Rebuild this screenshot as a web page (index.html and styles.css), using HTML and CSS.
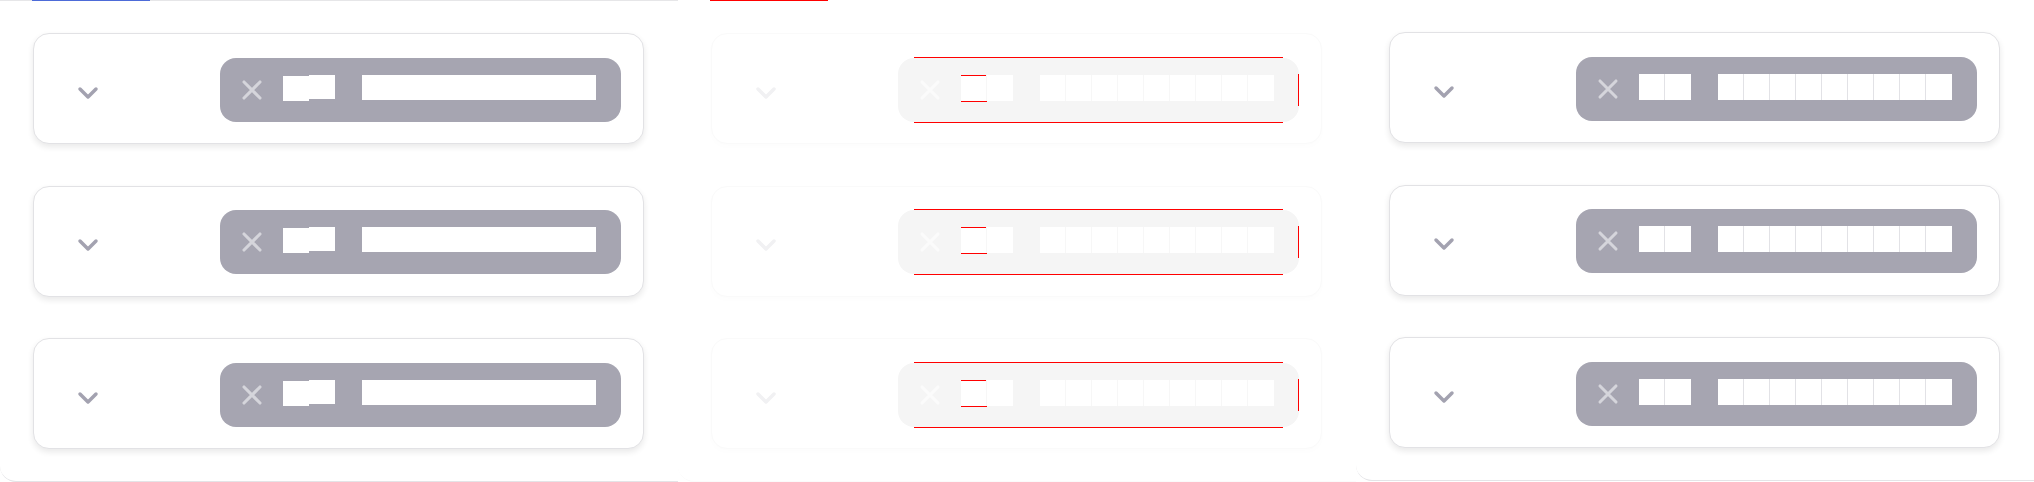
FILE: index.html
```html
<!DOCTYPE html>
<html lang="en">
<head>
<meta charset="utf-8">
<title>Chips</title>
<link rel="stylesheet" href="styles.css">
</head>
<body>
<div class="stage">
  <section class="panel panel-a">
    <div class="tabline"><span class="tab-ind"></span></div>
    <div class="list">
      <div class="card">
        <svg class="chev" viewBox="0 0 24 24"><path d="m6 9 6 6 6-6"/></svg>
        <div class="chip">
          <svg class="x" viewBox="0 0 24 24"><path d="M18 6 6 18M6 6l12 12"/></svg>
          <span class="word w1"><i class="c"></i><i class="c"></i></span>
          <span class="word w2"><i class="c"></i><i class="c"></i><i class="c"></i><i class="c"></i><i class="c"></i><i class="c"></i><i class="c"></i><i class="c"></i><i class="c"></i></span>
        </div>
      </div>
      <div class="card">
        <svg class="chev" viewBox="0 0 24 24"><path d="m6 9 6 6 6-6"/></svg>
        <div class="chip">
          <svg class="x" viewBox="0 0 24 24"><path d="M18 6 6 18M6 6l12 12"/></svg>
          <span class="word w1"><i class="c"></i><i class="c"></i></span>
          <span class="word w2"><i class="c"></i><i class="c"></i><i class="c"></i><i class="c"></i><i class="c"></i><i class="c"></i><i class="c"></i><i class="c"></i><i class="c"></i></span>
        </div>
      </div>
      <div class="card">
        <svg class="chev" viewBox="0 0 24 24"><path d="m6 9 6 6 6-6"/></svg>
        <div class="chip">
          <svg class="x" viewBox="0 0 24 24"><path d="M18 6 6 18M6 6l12 12"/></svg>
          <span class="word w1"><i class="c"></i><i class="c"></i></span>
          <span class="word w2"><i class="c"></i><i class="c"></i><i class="c"></i><i class="c"></i><i class="c"></i><i class="c"></i><i class="c"></i><i class="c"></i><i class="c"></i></span>
        </div>
      </div>
    </div>
  </section>

  <section class="panel panel-b">
    <div class="tabline"><span class="tab-ind"></span></div>
    <div class="list">
      <div class="card">
        <svg class="chev" viewBox="0 0 24 24"><path d="m6 9 6 6 6-6"/></svg>
        <div class="chip">
          <svg class="x" viewBox="0 0 24 24"><path d="M18 6 6 18M6 6l12 12"/></svg>
          <span class="word w1"><i class="c"></i><i class="c"></i></span>
          <span class="word w2"><i class="c"></i><i class="c"></i><i class="c"></i><i class="c"></i><i class="c"></i><i class="c"></i><i class="c"></i><i class="c"></i><i class="c"></i></span>
        </div>
      </div>
      <div class="card">
        <svg class="chev" viewBox="0 0 24 24"><path d="m6 9 6 6 6-6"/></svg>
        <div class="chip">
          <svg class="x" viewBox="0 0 24 24"><path d="M18 6 6 18M6 6l12 12"/></svg>
          <span class="word w1"><i class="c"></i><i class="c"></i></span>
          <span class="word w2"><i class="c"></i><i class="c"></i><i class="c"></i><i class="c"></i><i class="c"></i><i class="c"></i><i class="c"></i><i class="c"></i><i class="c"></i></span>
        </div>
      </div>
      <div class="card">
        <svg class="chev" viewBox="0 0 24 24"><path d="m6 9 6 6 6-6"/></svg>
        <div class="chip">
          <svg class="x" viewBox="0 0 24 24"><path d="M18 6 6 18M6 6l12 12"/></svg>
          <span class="word w1"><i class="c"></i><i class="c"></i></span>
          <span class="word w2"><i class="c"></i><i class="c"></i><i class="c"></i><i class="c"></i><i class="c"></i><i class="c"></i><i class="c"></i><i class="c"></i><i class="c"></i></span>
        </div>
      </div>
    </div>
  </section>

  <section class="panel panel-c">
    <div class="tabline"></div>
    <div class="list">
      <div class="card">
        <svg class="chev" viewBox="0 0 24 24"><path d="m6 9 6 6 6-6"/></svg>
        <div class="chip">
          <svg class="x" viewBox="0 0 24 24"><path d="M18 6 6 18M6 6l12 12"/></svg>
          <span class="word w1"><i class="c"></i><i class="c"></i></span>
          <span class="word w2"><i class="c"></i><i class="c"></i><i class="c"></i><i class="c"></i><i class="c"></i><i class="c"></i><i class="c"></i><i class="c"></i><i class="c"></i></span>
        </div>
      </div>
      <div class="card">
        <svg class="chev" viewBox="0 0 24 24"><path d="m6 9 6 6 6-6"/></svg>
        <div class="chip">
          <svg class="x" viewBox="0 0 24 24"><path d="M18 6 6 18M6 6l12 12"/></svg>
          <span class="word w1"><i class="c"></i><i class="c"></i></span>
          <span class="word w2"><i class="c"></i><i class="c"></i><i class="c"></i><i class="c"></i><i class="c"></i><i class="c"></i><i class="c"></i><i class="c"></i><i class="c"></i></span>
        </div>
      </div>
      <div class="card">
        <svg class="chev" viewBox="0 0 24 24"><path d="m6 9 6 6 6-6"/></svg>
        <div class="chip">
          <svg class="x" viewBox="0 0 24 24"><path d="M18 6 6 18M6 6l12 12"/></svg>
          <span class="word w1"><i class="c"></i><i class="c"></i></span>
          <span class="word w2"><i class="c"></i><i class="c"></i><i class="c"></i><i class="c"></i><i class="c"></i><i class="c"></i><i class="c"></i><i class="c"></i><i class="c"></i></span>
        </div>
      </div>
    </div>
  </section>
</div>
</body>
</html>
```
FILE: styles.css
```css
* { box-sizing: border-box; }
html, body {
  margin: 0;
  padding: 0;
  background: #ffffff;
  font-family: "Inter", "Liberation Sans", sans-serif;
}
.stage {
  display: flex;
  width: 2034px;
  height: 482px;
  overflow: hidden;
  align-items: flex-start;
}
.panel {
  --line: #e6e6e8;
  --ind: #4d6bd8;
  --card-border: #e2e2e5;
  --card-shadow: 0 3px 6px rgba(0, 0, 0, 0.09);
  --chev: #a3a2b0;
  --chip: #a6a5b1;
  --x: #d5d5db;
  --div: transparent;
  width: 678px;
  flex: 0 0 678px;
  height: 482px;
  background: #ffffff;
  border-bottom: 1px solid #e4e4e7;
  border-bottom-left-radius: 16px;
  display: flex;
  flex-direction: column;
}
.panel-b {
  --line: transparent;
  --ind: #ff0000;
  --card-border: #fafafa;
  --card-shadow: 0 3px 6px rgba(0, 0, 0, 0.012);
  --chev: #f1f1f3;
  --chip: #f5f5f5;
  --x: #fbfbfb;
  --div: #f7f7f7;
  border-bottom-color: #fbfbfb;
}
.panel-c {
  --div: #e2e2e6;
  height: 481px;
}
.tabline {
  height: 1px;
  flex: 0 0 1px;
  background: var(--line);
  display: flex;
}
.panel-c .tabline { height: 0; flex-basis: 0; }
.tab-ind {
  margin-left: 32px;
  width: 118px;
  height: 1px;
  background: var(--ind);
}
.list {
  padding: 32px 0 0 33px;
  display: flex;
  flex-direction: column;
  gap: 41.5px;
}
.card {
  width: 611px;
  height: 111px;
  border: 1px solid var(--card-border);
  border-radius: 16px;
  box-shadow: var(--card-shadow);
  background: #ffffff;
  display: flex;
  align-items: center;
  justify-content: space-between;
  padding: 0 22px 0 38px;
}
.chev {
  width: 32px;
  height: 32px;
  margin-top: 8px;
  fill: none;
  stroke: var(--chev);
  stroke-width: 2.6;
  stroke-linecap: round;
  stroke-linejoin: round;
}
.chip {
  position: relative;
  width: 401px;
  height: 64px;
  margin-top: 2px;
  border-radius: 16px;
  background: var(--chip);
  display: flex;
  align-items: center;
  padding: 0 25px 0 16px;
}
.x {
  width: 32px;
  height: 32px;
  flex: 0 0 32px;
  fill: none;
  stroke: var(--x);
  stroke-width: 2.3;
  stroke-linecap: round;
}
.word {
  display: flex;
  align-items: flex-start;
  height: 26px;
  margin-bottom: 4px;
}
.w1 { margin-left: 15px; }
.w2 { margin-left: 27px; }
.c {
  display: block;
  width: 26px;
  height: 26px;
  background: #ffffff;
  border-right: 1px solid var(--div);
}
.c:last-child { border-right: 0; }
.panel-a .w1 .c:first-child { margin-top: 1px; height: 25px; }
.panel-a .w1 .c:last-child { height: 24px; }
.panel-a .w2 .c { height: 25px; }

/* debug overlay marks in the middle panel */
.panel-b .chip::before {
  content: "";
  position: absolute;
  left: 16px;
  right: 16px;
  top: -1px;
  bottom: -1px;
  border-top: 1px solid #ff0000;
  border-bottom: 1px solid #ff0000;
}
.panel-b .chip::after {
  content: "";
  position: absolute;
  right: 0;
  top: 16px;
  bottom: 16px;
  border-right: 1px solid #ff0000;
}
.panel-b .w1 .c:first-child {
  box-shadow: inset 0 1px 0 #ff0000, 0 1px 0 #ff0000;
}
```
